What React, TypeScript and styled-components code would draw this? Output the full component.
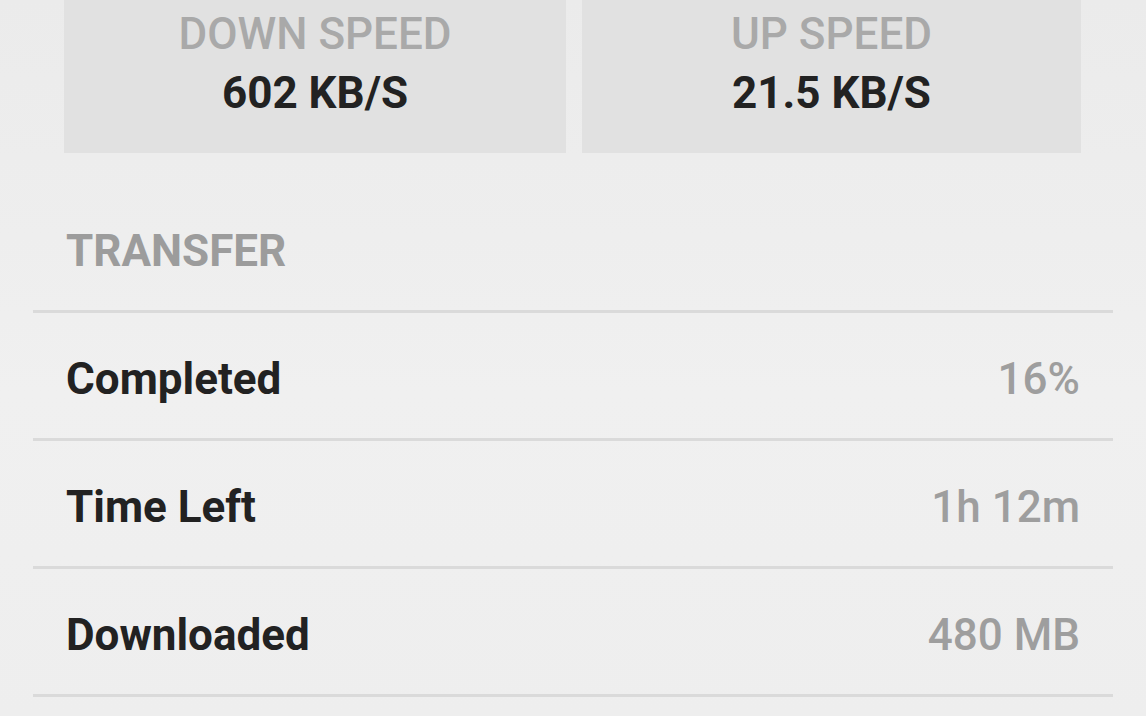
import React from "react";
import styled, { createGlobalStyle } from "styled-components";

const Global = createGlobalStyle`
  html, body {
    margin: 0;
    padding: 0;
    background: #eeeeee;
  }
  body {
    font-family: Roboto, "Noto Sans", "Liberation Sans", sans-serif;
    -webkit-font-smoothing: antialiased;
  }
`;

const Page = styled.div`
  width: 1146px;
  height: 716px;
  overflow: hidden;
  background: linear-gradient(180deg, #ebebeb 0%, #f0f0f0 55%, #eeeeee 100%);
  display: flex;
  flex-direction: column;
`;

const Cards = styled.div`
  display: grid;
  grid-template-columns: 502px 499px;
  gap: 16px;
  padding: 0 65px 0 64px;
`;

const Card = styled.div`
  background: #e1e1e1;
  height: 153px;
  box-sizing: border-box;
  padding-top: 12px;
  display: flex;
  flex-direction: column;
  align-items: center;
  gap: 15px;
`;

const CardLabel = styled.div`
  font-size: 44px;
  line-height: 44px;
  font-weight: 500;
  color: #a9a9a9;
`;

const CardValue = styled.div`
  font-size: 44px;
  line-height: 44px;
  font-weight: 700;
  color: #222222;
`;

const List = styled.div`
  padding: 0 33px;
  display: flex;
  flex-direction: column;
`;

const SectionHeader = styled.div`
  margin-top: 76px;
  padding: 0 33px 37px;
  font-size: 44px;
  line-height: 44px;
  font-weight: 700;
  color: #9c9c9c;
  border-bottom: 3px solid #dadada;
`;

const Row = styled.div`
  height: 125px;
  box-sizing: content-box;
  border-bottom: 3px solid #dadada;
  display: flex;
  justify-content: space-between;
  align-items: flex-start;
  padding: 0 33px;
`;

const RowLabel = styled.span`
  margin-top: 44px;
  font-size: 44px;
  line-height: 44px;
  font-weight: 700;
  color: #222222;
`;

const RowValue = styled.span`
  margin-top: 44px;
  font-size: 44px;
  line-height: 44px;
  font-weight: 500;
  color: #9e9e9e;
`;

const speeds = [
  { label: "DOWN SPEED", value: "602 KB/S" },
  { label: "UP SPEED", value: "21.5 KB/S" },
];

const rows = [
  { label: "Completed", value: "16%" },
  { label: "Time Left", value: "1h 12m" },
  { label: "Downloaded", value: "480 MB" },
];

export default function App() {
  return (
    <>
      <Global />
      <Page>
        <Cards>
          {speeds.map((s) => (
            <Card key={s.label}>
              <CardLabel>{s.label}</CardLabel>
              <CardValue>{s.value}</CardValue>
            </Card>
          ))}
        </Cards>
        <List>
          <SectionHeader>TRANSFER</SectionHeader>
          {rows.map((r) => (
            <Row key={r.label}>
              <RowLabel>{r.label}</RowLabel>
              <RowValue>{r.value}</RowValue>
            </Row>
          ))}
        </List>
      </Page>
    </>
  );
}
